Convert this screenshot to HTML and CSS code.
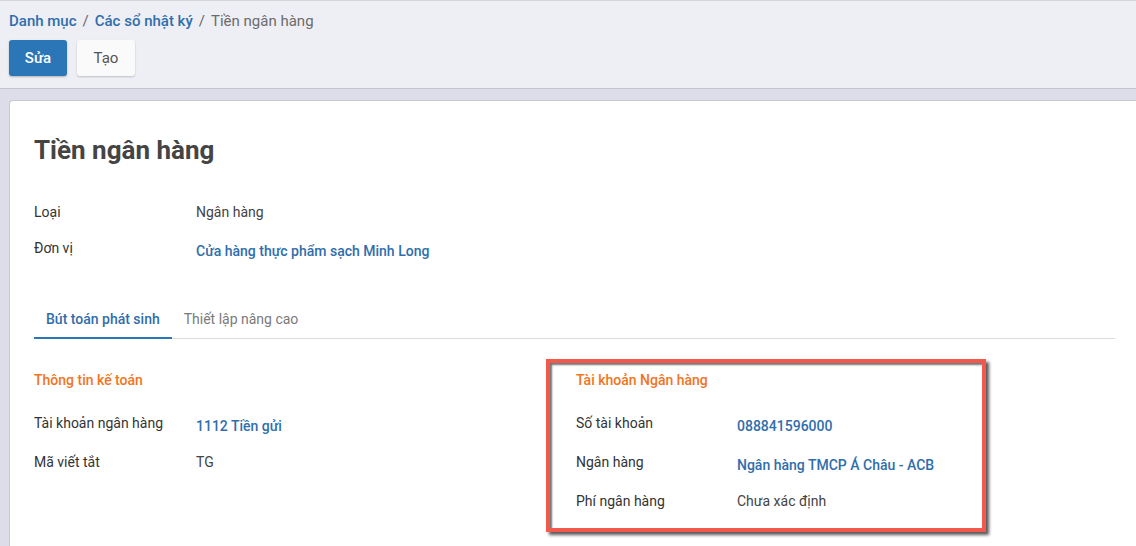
FILE: index.html
```html
<!DOCTYPE html>
<html lang="vi">
<head>
<meta charset="utf-8">
<title>Tiền ngân hàng</title>
<link rel="stylesheet" href="styles.css">
</head>
<body>
<div class="topbar">
  <div class="breadcrumb">
    <a class="crumb">Danh mục</a><span class="sep">/</span><a class="crumb">Các sổ nhật ký</a><span class="sep">/</span><span class="current">Tiền ngân hàng</span>
  </div>
  <div class="actions">
    <button class="btn btn-primary">Sửa</button>
    <button class="btn btn-default">Tạo</button>
  </div>
</div>
<div class="main">
  <div class="sheet">
    <h1 class="title">Tiền ngân hàng</h1>
    <div class="fields">
      <div class="row row-top"><div class="label">Loại</div><div class="val">Ngân hàng</div></div>
      <div class="row row-top"><div class="label">Đơn vị</div><div class="val link">Cửa hàng thực phẩm sạch Minh Long</div></div>
    </div>
    <div class="tabs">
      <div class="tab active">Bút toán phát sinh</div>
      <div class="tab">Thiết lập nâng cao</div>
    </div>
    <div class="columns">
      <div class="col col-left">
        <div class="section">Thông tin kế toán</div>
        <div class="row"><div class="label">Tài khoản ngân hàng</div><div class="val link">1112 Tiền gửi</div></div>
        <div class="row"><div class="label">Mã viết tắt</div><div class="val">TG</div></div>
      </div>
      <div class="col col-box">
        <div class="section">Tài khoản Ngân hàng</div>
        <div class="row row-right"><div class="label">Số tài khoản</div><div class="val link">088841596000</div></div>
        <div class="row row-right"><div class="label">Ngân hàng</div><div class="val link">Ngân hàng TMCP Á Châu - ACB</div></div>
        <div class="row row-right"><div class="label">Phí ngân hàng</div><div class="val">Chưa xác định</div></div>
      </div>
    </div>
  </div>
</div>
</body>
</html>
```
FILE: styles.css
```css
* { box-sizing: border-box; }
html, body { margin: 0; padding: 0; }
body {
  font-family: Roboto, "Liberation Sans", Arial, sans-serif;
  font-size: 14px;
  color: #333;
  background: #dcdde8;
  height: 546px;
  overflow: hidden;
}
.topbar {
  height: 89px;
  background: #eeeff5;
  border-top: 1px solid #d4d4da;
  border-bottom: 1px solid #c4c4cc;
  padding: 10px 9px 0;
}
.breadcrumb {
  font-size: 15px;
  line-height: 20px;
  display: flex;
  align-items: center;
}
.crumb { color: #2f6eab; font-weight: 500; }
.sep { color: #666; margin: 0 6px; }
.current { color: #6b6b6b; }
.actions {
  display: flex;
  gap: 10px;
  margin-top: 9px;
}
.btn {
  width: 58px;
  height: 36px;
  border: none;
  border-radius: 3px;
  font-family: Roboto, "Liberation Sans", Arial, sans-serif;
  font-size: 15px;
  padding: 0;
}
.btn-primary {
  background: #2a76b6;
  color: #fff;
  font-weight: 500;
  box-shadow: 0 1px 2px rgba(0,0,0,0.25);
}
.btn-default {
  background: #fafafa;
  color: #555;
  box-shadow: 0 1px 2px rgba(0,0,0,0.2);
}
.main {
  padding: 11px 0 0 9px;
}
.sheet {
  background: #fff;
  border-top: 1px solid #c8c8d2;
  border-left: 1px solid #c8c8d2;
  border-top-left-radius: 4px;
  padding: 33px 21px 0 24px;
  height: 460px;
}
.title {
  margin: 0;
  font-size: 26px;
  line-height: 32px;
  font-weight: 700;
  color: #444;
}
.fields { margin-top: 26px; }
.row {
  display: grid;
  grid-template-columns: 162px 1fr;
  min-height: 39px;
  padding-top: 10px;
  line-height: 20px;
}
.row-top { min-height: 36px; }
.row-right { grid-template-columns: 161px 1fr; }
.label { color: #333; }
.val { color: #444; }
.val.link { color: #2f6eab; font-weight: 500; padding-top: 3px; }
.tabs {
  display: flex;
  margin-top: 45px;
  border-bottom: 1px solid #dcdcdc;
}
.tab {
  padding: 0 12px 8px;
  line-height: 20px;
  color: #7a7a7a;
  border-bottom: 2px solid transparent;
  margin-bottom: -1px;
}
.tab.active {
  color: #2f6eab;
  font-weight: 500;
  border-bottom-color: #2a76b6;
}
.columns {
  display: grid;
  grid-template-columns: 512px 440px;
  margin-top: 20px;
  align-items: start;
}
.col-left { padding-top: 11px; }
.col-box {
  border: 4px solid #f2584c;
  padding: 7px 0 8px 26px;
  box-shadow: 3px 3px 3px rgba(0,0,0,0.65), inset 2px 2px 2px rgba(0,0,0,0.55);
}
.section {
  color: #f37421;
  font-weight: 500;
  line-height: 20px;
  margin-bottom: 13px;
}
```
